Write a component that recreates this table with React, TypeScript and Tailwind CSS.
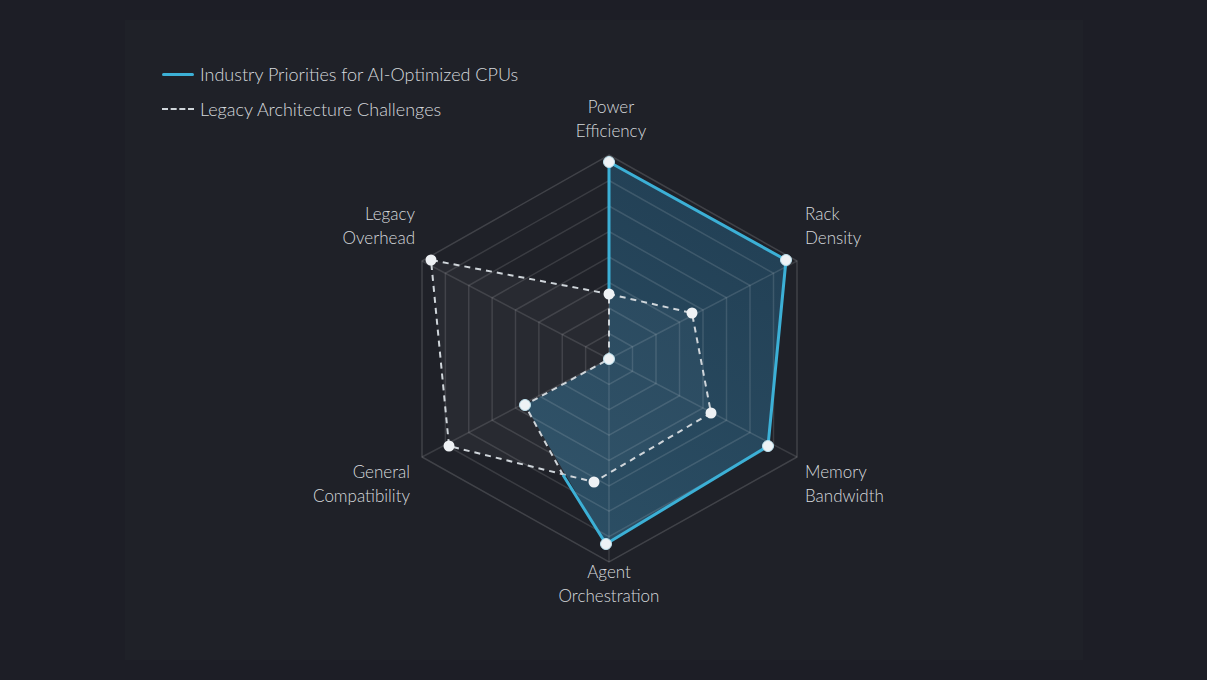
const C = { x: 609, y: 359 }

// axis end points of the outer ring (page coordinates)
const axes = [
  { x: 609, y: 155 },
  { x: 797, y: 261 },
  { x: 797, y: 457 },
  { x: 609, y: 562 },
  { x: 422, y: 457 },
  { x: 422, y: 261 },
]

const ring = (k: number) =>
  axes
    .map((a) => `${C.x + (a.x - C.x) * k},${C.y + (a.y - C.y) * k}`)
    .join(" ")

const industry = [
  [609, 162],
  [786, 260],
  [768, 446],
  [606, 544],
  [525, 405],
  [609, 359],
]

const legacy = [
  [609, 294],
  [692, 313],
  [711, 413],
  [594, 482],
  [449, 446],
  [431, 260],
]

const pts = (p: number[][]) => p.map(([x, y]) => `${x},${y}`).join(" ")

const labels = [
  { lines: ["Power", "Efficiency"], x: 611, y: 113, anchor: "middle" },
  { lines: ["Rack", "Density"], x: 805, y: 220, anchor: "start" },
  { lines: ["Memory", "Bandwidth"], x: 805, y: 478, anchor: "start" },
  { lines: ["Agent", "Orchestration"], x: 609, y: 578, anchor: "middle" },
  { lines: ["General", "Compatibility"], x: 410, y: 478, anchor: "end" },
  { lines: ["Legacy", "Overhead"], x: 415, y: 220, anchor: "end" },
]

function RadarChart() {
  return (
    <svg viewBox="125 20 958 640" className="h-full w-full">
      <defs>
        <linearGradient id="ind" x1="0.6" y1="0" x2="0.2" y2="1">
          <stop offset="0%" stopColor="#2a88bd" stopOpacity="0.3" />
          <stop offset="100%" stopColor="#3f93bf" stopOpacity="0.4" />
        </linearGradient>
      </defs>

      <polygon points={pts(legacy)} fill="#ffffff" fillOpacity="0.045" />
      <polygon points={pts(industry)} fill="url(#ind)" />

      {[1, 2, 3, 4, 5, 6, 7, 8].map((k) => (
        <polygon
          key={k}
          points={ring(k / 8)}
          fill="none"
          stroke="#ffffff"
          strokeOpacity={k === 8 ? 0.15 : 0.12}
          strokeWidth="1.5"
        />
      ))}
      {axes.map((a, i) => (
        <line key={i} x1={C.x} y1={C.y} x2={a.x} y2={a.y} stroke="#ffffff" strokeOpacity="0.12" strokeWidth="1.5" />
      ))}

      <polygon
        points={pts(legacy)}
        fill="none"
        stroke="#cfd5da"
        strokeWidth="2"
        strokeDasharray="6 5"
      />
      <polyline
        points="563,475 525,405 609,359 609,294"
        fill="none"
        stroke="#cfd5da"
        strokeWidth="2"
        strokeDasharray="6 5"
      />
      <polyline
        points="609,294 609,162 786,260 768,446 606,544 563,475"
        fill="none"
        stroke="#3cb0d6"
        strokeWidth="3"
        strokeLinejoin="round"
      />

      {legacy.map(([x, y], i) => (
        <circle key={`l${i}`} cx={x} cy={y} r="5.5" fill="#eef1f4" />
      ))}
      {industry.map(([x, y], i) => (
        <circle key={`i${i}`} cx={x} cy={y} r="5.5" fill="#eef2f5" stroke="#bfe3ef" strokeWidth="1" />
      ))}

      {labels.map((l, i) => (
        <text
          key={i}
          x={l.x}
          y={l.y}
          textAnchor={l.anchor as "start" | "middle" | "end"}
          fill="#d6d9dd"
          fontSize="17"
          fontWeight="300"
          fontFamily="Lato, 'Open Sans', sans-serif"
        >
          {l.lines.map((t, j) => (
            <tspan key={j} x={l.x} dy={j === 0 ? 0 : 23.5}>
              {t}
            </tspan>
          ))}
        </text>
      ))}
    </svg>
  )
}

export default function App() {
  return (
    <div className="min-h-screen w-full bg-[#1d1e26] pl-[125px] pt-[20px] font-['Lato',sans-serif] font-light">
      <div className="grid h-[640px] w-[958px] bg-[#1f2128]">
        <div className="col-start-1 row-start-1 flex flex-col gap-[9px] pl-[37px] pt-[41px] text-[18px] leading-[26px] text-[#d6d9dd]">
          <div className="flex items-center gap-[6px]">
            <span className="h-[3px] w-[32px] rounded-full bg-[#3cb0d6]" />
            <span>Industry Priorities for AI-Optimized CPUs</span>
          </div>
          <div className="flex items-center gap-[6px]">
            <span className="w-[32px] border-t-2 border-dashed border-[#cfd5da]" />
            <span>Legacy Architecture Challenges</span>
          </div>
        </div>
        <div className="col-start-1 row-start-1">
          <RadarChart />
        </div>
      </div>
    </div>
  )
}
